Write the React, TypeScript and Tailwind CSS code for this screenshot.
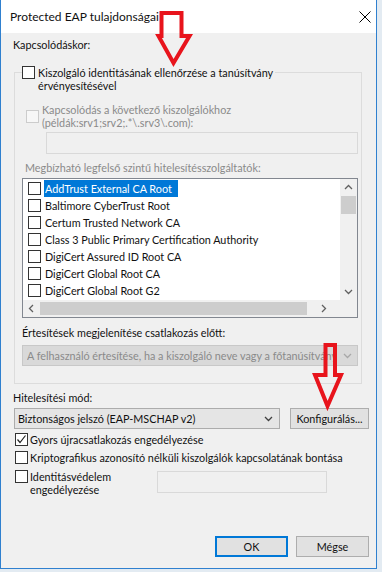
import React from 'react'

const rows = [
  'AddTrust External CA Root',
  'Baltimore CyberTrust Root',
  'Certum Trusted Network CA',
  'Class 3 Public Primary Certification Authority',
  'DigiCert Assured ID Root CA',
  'DigiCert Global Root CA',
  'DigiCert Global Root G2',
]

function Box({ checked = false, disabled = false }: { checked?: boolean; disabled?: boolean }) {
  return (
    <div
      className={`w-[13px] h-[13px] shrink-0 border flex items-center justify-center ${
        disabled ? 'border-[#cccccc] bg-[#f7f7f7]' : 'border-[#333333] bg-white'
      }`}
    >
      {checked && (
        <svg width="11" height="11" viewBox="0 0 11 11">
          <polyline points="1.5,5.5 4,8.5 9.5,1.5" fill="none" stroke="#222" strokeWidth="1.2" />
        </svg>
      )}
    </div>
  )
}

function Chevron({ dir, color = '#606060' }: { dir: 'up' | 'down' | 'left' | 'right'; color?: string }) {
  const pts = {
    up: '1,5 4.5,1.5 8,5',
    down: '1,2 4.5,5.5 8,2',
    left: '5,1 1.5,4.5 5,8',
    right: '2,1 5.5,4.5 2,8',
  }[dir]
  const w = dir === 'up' || dir === 'down' ? 9 : 7
  const h = dir === 'up' || dir === 'down' ? 7 : 9
  return (
    <svg width={w} height={h} viewBox={`0 0 ${w} ${h}`}>
      <polyline points={pts} fill="none" stroke={color} strokeWidth="1.3" />
    </svg>
  )
}

export default function App() {
  return (
    <div className="w-[382px] h-[572px] bg-[#e3ebf2] font-['Lato',sans-serif] text-[10.8px] leading-[13px] text-[#111]">
      <div className="relative w-[377px] h-[569px] border-l border-r border-b border-[#2f80cf] bg-[#f0f0f0] flex flex-col">
        {/* title bar */}
        <div className="h-[33px] shrink-0 bg-white flex items-center pl-[9px] text-[12px]">
          Protected EAP tulajdonságai
        </div>

        <div className="flex flex-col pl-[12px]">
          <div className="mt-[4px] leading-[16px]">Kapcsolódáskor:</div>

          {/* group box */}
          <div className="mt-[19px] ml-[1px] w-[348px] h-[312px] border border-[#dcdcdc] flex flex-col">
            <div className="-mt-[7px] ml-[7px] self-start flex bg-[#f0f0f0] pr-[2px]">
              <Box />
              <div className="ml-[3px]">
                Kiszolgáló identitásának ellenőrzése a tanúsítvány
                <br />
                érvényesítésével
              </div>
            </div>

            <div className="mt-[11px] ml-[11px] flex items-center text-[#8a8a8a]">
              <Box disabled />
              <div className="ml-[3px]">
                Kapcsolódás a következő kiszolgálókhoz
                <br />
                (példák:srv1;srv2;.*\.srv3\.com):
              </div>
            </div>

            <div className="mt-[3px] ml-[31px] w-[312px] h-[22px] border border-[#d9d9d9] bg-[#f0f0f0]" />

            <div className="mt-[7px] ml-[10px] text-[#8a8a8a]">
              Megbízható legfelső szintű hitelesítésszolgáltatók:
            </div>

            {/* list box */}
            <div className="mt-[4px] ml-[7px] w-[336px] h-[140px] border border-[#828790] bg-white grid grid-cols-[317px_17px] grid-rows-[121px_17px]">
              <div className="pt-[1px] overflow-hidden">
                {rows.map((r, i) => (
                  <div key={r} className="h-[17px] flex items-center pl-[5px]">
                    <Box />
                    <div
                      className={`ml-[3px] h-[17px] flex items-center px-[1px] whitespace-nowrap ${
                        i === 0 ? 'bg-[#0078d7] text-white pr-[6px]' : ''
                      }`}
                    >
                      {r}
                    </div>
                  </div>
                ))}
              </div>
              <div className="bg-[#f0f0f0] flex flex-col items-center">
                <div className="h-[17px] flex items-center justify-center">
                  <Chevron dir="up" />
                </div>
                <div className="w-[15px] h-[18px] bg-[#cdcdcd]" />
                <div className="flex-1" />
                <div className="h-[17px] flex items-center justify-center">
                  <Chevron dir="down" />
                </div>
              </div>
              <div className="bg-[#f0f0f0] flex items-center">
                <div className="w-[17px] flex justify-center">
                  <Chevron dir="left" />
                </div>
                <div className="w-[267px] h-[13px] bg-[#cdcdcd]" />
                <div className="flex-1 flex justify-center">
                  <Chevron dir="right" />
                </div>
              </div>
              <div className="bg-[#f0f0f0]" />
            </div>

            <div className="mt-[8px] ml-[7px]">Értesítések megjelenítése csatlakozás előtt:</div>

            <div className="mt-[6px] ml-[7px] w-[336px] h-[21px] border border-[#c8c8c8] bg-[#d9d9d9] flex items-center pl-[4px] pr-[5px] text-[#8a8a8a]">
              <div className="flex-1 overflow-hidden whitespace-nowrap">
                A felhasználó értesítése, ha a kiszolgáló neve vagy a főtanúsítvány
              </div>
              <div className="ml-[6px]">
                <Chevron dir="down" color="#a8a8a8" />
              </div>
            </div>
          </div>

          <div className="mt-[7px]">Hitelesítési mód:</div>

          <div className="mt-[4px] ml-[1px] flex">
            <div className="w-[266px] h-[21px] border border-[#acacac] bg-[#e5e5e5] flex items-center pl-[3px] pr-[6px]">
              <div className="flex-1 whitespace-nowrap">Biztonságos jelszó (EAP-MSCHAP v2)</div>
              <Chevron dir="down" color="#404040" />
            </div>
            <div className="ml-[10px] w-[79px] h-[21px] border border-[#adadad] bg-[#e1e1e1] flex items-center justify-center">
              Konfigurálás...
            </div>
          </div>

          <div className="mt-[4px] ml-[2px] flex items-center">
            <Box checked />
            <div className="ml-[2px]">Gyors újracsatlakozás engedélyezése</div>
          </div>

          <div className="mt-[5px] ml-[2px] flex items-center">
            <Box />
            <div className="ml-[2px]">Kriptografikus azonosító nélküli kiszolgálók kapcsolatának bontása</div>
          </div>

          <div className="mt-[6px] ml-[2px] flex items-start">
            <Box />
            <div className="ml-[2px] w-[127px]">
              Identitásvédelem
              <br />
              engedélyezése
            </div>
            <div className="mt-[1px] w-[170px] h-[22px] border border-[#d9d9d9] bg-[#f0f0f0]" />
          </div>

          <div className="mt-[40px] flex justify-end pr-[7px] gap-[8px]">
            <div className="w-[73px] h-[21px] border-2 border-[#0078d7] bg-[#e1e1e1] flex items-center justify-center">
              OK
            </div>
            <div className="w-[73px] h-[21px] border border-[#adadad] bg-[#e1e1e1] flex items-center justify-center">
              Mégse
            </div>
          </div>
        </div>

        {/* close glyph + red annotation arrows */}
        <svg className="absolute left-0 top-0 pointer-events-none" width="377" height="569" viewBox="0 0 377 569">
          <line x1="358.5" y1="11.5" x2="369.5" y2="22.5" stroke="#000" strokeWidth="1" />
          <line x1="369.5" y1="11.5" x2="358.5" y2="22.5" stroke="#000" strokeWidth="1" />
          <polygon
            points="160.5,13 180.5,13 180.5,36 188.5,36 172.5,63 157.5,36 160.5,36"
            fill="none"
            stroke="#e8141c"
            strokeWidth="4"
            strokeLinejoin="miter"
          />
          <polygon
            points="324.5,345 334,345 334,375 340,375 326.5,406 314,375 324.5,375"
            fill="none"
            stroke="#e8141c"
            strokeWidth="4"
            strokeLinejoin="miter"
          />
        </svg>
      </div>
    </div>
  )
}
